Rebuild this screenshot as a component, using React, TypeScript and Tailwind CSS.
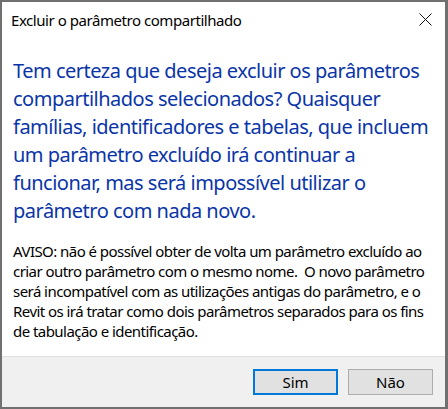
import React from "react";

const mainLines = [
  "Tem certeza que deseja excluir os parâmetros",
  "compartilhados selecionados? Quaisquer",
  "famílias, identificadores e tabelas, que incluem",
  "um parâmetro excluído irá continuar a",
  "funcionar, mas será impossível utilizar o",
  "parâmetro com nada novo.",
];

const warnLines = [
  "AVISO: não é possível obter de volta um parâmetro excluído ao",
  "criar outro parâmetro com o mesmo nome.  O novo parâmetro",
  "será incompatível com as utilizações antigas do parâmetro, e o",
  "Revit os irá tratar como dois parâmetros separados para os fins",
  "de tabulação e identificação.",
];

const CloseIcon = () => (
  <svg width="13" height="13" viewBox="0 0 13 13" className="block">
    <path d="M0.5 0.5 L12.5 12.5 M12.5 0.5 L0.5 12.5" stroke="#111" strokeWidth="1" fill="none" />
  </svg>
);

export default function App() {
  return (
    <div className="w-[448px] h-[409px] bg-white border-l-2 border-t-2 border-b-2 border-r-[3px] border-[#707070] flex flex-col font-['Noto_Sans',sans-serif] text-black">
      {/* Title bar */}
      <div className="flex items-start justify-between h-[30px] pt-[8px] pl-[9px] pr-[13px]">
        <span className="text-[15px] leading-[20px] whitespace-nowrap tracking-[-0.45px]">
          Excluir o parâmetro compartilhado
        </span>
        <div className="pt-[3px]">
          <CloseIcon />
        </div>
      </div>

      {/* Content */}
      <div className="flex-1 pl-[11px] pt-[25px]">
        <div className="text-[20px] leading-[28px] text-[#0a35a8] tracking-[-0.5px]">
          {mainLines.map((l) => (
            <div key={l} className="whitespace-nowrap">
              {l}
            </div>
          ))}
        </div>
        <div className="mt-[16px] text-[15px] leading-[20px] tracking-[-0.55px]">
          {warnLines.map((l) => (
            <div key={l} className="whitespace-pre">
              {l}
            </div>
          ))}
        </div>
      </div>

      {/* Footer */}
      <div className="h-[51px] bg-[#f0f0f0] border-t border-[#dfdfdf] flex justify-end items-start gap-[10px] pt-[12px] pr-[12px]">
        <button className="w-[85px] h-[26px] bg-[#e1e1e1] border-2 border-[#0078d7] text-[15px] leading-none">
          Sim
        </button>
        <button className="w-[85px] h-[26px] bg-[#e1e1e1] border border-[#adadad] text-[15px] leading-none">
          Não
        </button>
      </div>
    </div>
  );
}
